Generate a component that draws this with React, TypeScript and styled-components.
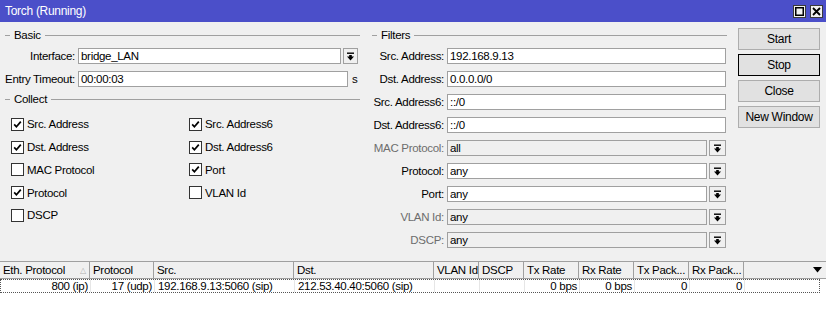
import React from "react"
import styled, { createGlobalStyle } from "styled-components"

const GlobalStyle = createGlobalStyle`
  html, body {
    margin: 0;
    padding: 0;
    background: #f0f0f0;
  }
  body {
    font-family: "Liberation Sans", Arial, sans-serif;
    font-size: 11.5px;
    letter-spacing: -0.3px;
    color: #000;
  }
  * {
    box-sizing: border-box;
  }
`

// ******************** //
// WINDOW FRAME
// ******************** //

const Window = styled.div`
  width: 826px;
  height: 321px;
  display: flex;
  flex-direction: column;
  background: #f0f0f0;
  overflow: hidden;
`

const TitleBar = styled.div`
  height: 22px;
  flex: none;
  display: flex;
  align-items: center;
  justify-content: space-between;
  padding: 0 3px 0 5px;
  background: #4b4fc9;
  color: #fff;
  font-size: 12px;
`

const TitleButtons = styled.div`
  display: flex;
  gap: 4px;
`

const TitleButton = styled.div`
  width: 13px;
  height: 13px;
  display: flex;
  align-items: center;
  justify-content: center;
  background: #f0f0f0;
  border: 1px solid #3a3a3a;
`

const Body = styled.div`
  flex: 1;
  display: flex;
  padding-top: 6px;
`

const LeftPane = styled.div`
  width: 362px;
  flex: none;
  display: flex;
  flex-direction: column;
  padding-right: 2px;
`

const FilterPane = styled.div`
  width: 361px;
  margin-left: 5px;
  flex: none;
  display: flex;
  flex-direction: column;
  padding-right: 1px;
`

const ButtonPane = styled.div`
  margin-left: 10px;
  width: 82px;
  display: flex;
  flex-direction: column;
  gap: 4px;
`

// ******************** //
// FORM PARTS
// ******************** //

const GroupHeader = styled.div<{ $top?: number }>`
  height: 14px;
  display: flex;
  align-items: center;
  margin-top: ${p => p.$top ?? 0}px;
  margin-bottom: 6px;
  padding-left: 5px;

  &::before {
    content: "";
    width: 5px;
    height: 1px;
    background: #a0a0a0;
  }

  &::after {
    content: "";
    flex: 1;
    height: 1px;
    background: #a0a0a0;
  }

  span {
    padding: 0 4px;
  }
`

const FieldRow = styled.div`
  height: 16px;
  display: flex;
  align-items: center;
  margin-bottom: 7px;
`

const FieldLabel = styled.div<{ $width: number; $disabled?: boolean }>`
  width: ${p => p.$width}px;
  flex: none;
  text-align: right;
  white-space: nowrap;
  color: ${p => (p.$disabled ? "#6d6d6d" : "#000")};
`

const TextBox = styled.div<{ $width: number; $disabled?: boolean }>`
  width: ${p => p.$width}px;
  height: 16px;
  margin-left: 3px;
  padding: 0 2px;
  line-height: 14px;
  border: 1px solid #a0a0a0;
  background: ${p => (p.$disabled ? "#f0f0f0" : "#fff")};
  white-space: nowrap;
  overflow: hidden;
`

const DropButton = styled.div<{ $width: number }>`
  width: ${p => p.$width}px;
  height: 16px;
  margin-left: 2px;
  display: flex;
  align-items: center;
  justify-content: center;
  border: 1px solid #a0a0a0;
  background: #f0f0f0;
`

const Unit = styled.span`
  margin-left: 4px;
`

const CheckGrid = styled.div`
  display: grid;
  grid-template-columns: 178px 1fr;
  grid-auto-rows: 22.75px;
  padding-left: 11px;
  margin-top: 1px;
`

const CheckItem = styled.div`
  display: flex;
  align-items: center;
  gap: 3px;
`

const Box = styled.div`
  width: 13px;
  height: 13px;
  display: flex;
  align-items: center;
  justify-content: center;
  border: 1px solid #333;
  background: #fff;
`

const ActionButton = styled.div<{ $focused?: boolean }>`
  height: 22px;
  display: flex;
  align-items: center;
  justify-content: center;
  background: #e1e1e1;
  border: 1px solid ${p => (p.$focused ? "#000" : "#adadad")};
  font-size: 12px;
`

// ******************** //
// TABLE
// ******************** //

const Table = styled.div`
  height: 60px;
  flex: none;
  background: #fff;
`

const HeaderRow = styled.div`
  height: 18px;
  display: flex;
  background: #f0f0f0;
  border-top: 1px solid #a0a0a0;
  border-bottom: 1px solid #a0a0a0;
`

const HeaderCell = styled.div<{ $width: number }>`
  width: ${p => p.$width}px;
  flex: none;
  display: flex;
  align-items: center;
  justify-content: space-between;
  padding: 0 3px;
  border-right: 1px solid #a0a0a0;
  white-space: nowrap;
  overflow: hidden;
`

const HeaderFill = styled.div`
  flex: 1;
  display: flex;
  align-items: center;
  justify-content: flex-end;
  padding-right: 4px;
`

const SortMark = styled.span`
  color: #b0b0b0;
  font-size: 8px;
`

const DataRow = styled.div`
  width: 820px;
  height: 14px;
  display: flex;
  border: 1px dotted #555;
`

const DataCell = styled.div<{ $width: number; $align?: "left" | "right" }>`
  width: ${p => p.$width}px;
  flex: none;
  padding: 0 2px 0 3px;
  line-height: 12px;
  text-align: ${p => p.$align ?? "left"};
  border-right: 1px solid #e6e6e6;
  white-space: nowrap;
  overflow: hidden;
`

// ******************** //
// ICONS
// ******************** //

const DropIcon = () => (
  <svg width="9" height="9" viewBox="0 0 9 9">
    <rect x="1" y="0.5" width="7" height="1.4" fill="#000" />
    <rect x="3.2" y="3" width="2.6" height="2" fill="#000" />
    <path d="M1 4.6 H8 L4.5 8.4 Z" fill="#000" />
  </svg>
)

const CheckIcon = () => (
  <svg width="9" height="9" viewBox="0 0 9 9">
    <path d="M1.2 4.4 L3.4 6.8 L7.8 1.6" fill="none" stroke="#000" strokeWidth="1.7" />
  </svg>
)

const MaxIcon = () => (
  <svg width="9" height="9" viewBox="0 0 9 9">
    <rect x="0.75" y="0.75" width="7.5" height="7.5" fill="none" stroke="#000" strokeWidth="1.5" />
  </svg>
)

const CloseIcon = () => (
  <svg width="9" height="9" viewBox="0 0 9 9">
    <path d="M1 1 L8 8 M8 1 L1 8" stroke="#000" strokeWidth="1.8" />
  </svg>
)

const ColumnMenuIcon = () => (
  <svg width="9" height="6" viewBox="0 0 9 6">
    <path d="M0 0 H9 L4.5 5.5 Z" fill="#000" />
  </svg>
)

// ******************** //
// DATA
// ******************** //

const checks = [
  { label: "Src. Address", on: true },
  { label: "Src. Address6", on: true },
  { label: "Dst. Address", on: true },
  { label: "Dst. Address6", on: true },
  { label: "MAC Protocol", on: false },
  { label: "Port", on: true },
  { label: "Protocol", on: true },
  { label: "VLAN Id", on: false },
  { label: "DSCP", on: false },
]

const textFilters = [
  { label: "Src. Address:", value: "192.168.9.13" },
  { label: "Dst. Address:", value: "0.0.0.0/0" },
  { label: "Src. Address6:", value: "::/0" },
  { label: "Dst. Address6:", value: "::/0" },
]

const selectFilters = [
  { label: "MAC Protocol:", value: "all", disabled: true },
  { label: "Protocol:", value: "any", disabled: false },
  { label: "Port:", value: "any", disabled: false },
  { label: "VLAN Id:", value: "any", disabled: true },
  { label: "DSCP:", value: "any", disabled: true },
]

const columns = [
  { title: "Eth. Protocol", width: 90, value: "800 (ip)", align: "right" as const, sorted: true },
  { title: "Protocol", width: 64, value: "17 (udp)", align: "right" as const },
  { title: "Src.", width: 140, value: "192.168.9.13:5060 (sip)" },
  { title: "Dst.", width: 140, value: "212.53.40.40:5060 (sip)" },
  { title: "VLAN Id", width: 45, value: "" },
  { title: "DSCP", width: 45, value: "" },
  { title: "Tx Rate", width: 55, value: "0 bps", align: "right" as const },
  { title: "Rx Rate", width: 55, value: "0 bps", align: "right" as const },
  { title: "Tx Pack...", width: 55, value: "0", align: "right" as const },
  { title: "Rx Pack...", width: 55, value: "0", align: "right" as const },
]

export default function App() {
  return (
    <>
      <GlobalStyle />
      <Window>
        <TitleBar>
          <span>Torch (Running)</span>
          <TitleButtons>
            <TitleButton><MaxIcon /></TitleButton>
            <TitleButton><CloseIcon /></TitleButton>
          </TitleButtons>
        </TitleBar>

        <Body>
          <LeftPane>
            <GroupHeader><span>Basic</span></GroupHeader>
            <FieldRow>
              <FieldLabel $width={75}>Interface:</FieldLabel>
              <TextBox $width={263}>bridge_LAN</TextBox>
              <DropButton $width={15}><DropIcon /></DropButton>
            </FieldRow>
            <FieldRow>
              <FieldLabel $width={75}>Entry Timeout:</FieldLabel>
              <TextBox $width={270}>00:00:03</TextBox>
              <Unit>s</Unit>
            </FieldRow>

            <GroupHeader $top={-2}><span>Collect</span></GroupHeader>
            <CheckGrid>
              {checks.map(c => (
                <CheckItem key={c.label}>
                  <Box>{c.on && <CheckIcon />}</Box>
                  <span>{c.label}</span>
                </CheckItem>
              ))}
            </CheckGrid>
          </LeftPane>

          <FilterPane>
            <GroupHeader><span>Filters</span></GroupHeader>
            {textFilters.map(f => (
              <FieldRow key={f.label}>
                <FieldLabel $width={77}>{f.label}</FieldLabel>
                <TextBox $width={279}>{f.value}</TextBox>
              </FieldRow>
            ))}
            {selectFilters.map(f => (
              <FieldRow key={f.label}>
                <FieldLabel $width={77} $disabled={f.disabled}>{f.label}</FieldLabel>
                <TextBox $width={260} $disabled={f.disabled}>{f.value}</TextBox>
                <DropButton $width={17}><DropIcon /></DropButton>
              </FieldRow>
            ))}
          </FilterPane>

          <ButtonPane>
            <ActionButton>Start</ActionButton>
            <ActionButton $focused>Stop</ActionButton>
            <ActionButton>Close</ActionButton>
            <ActionButton>New Window</ActionButton>
          </ButtonPane>
        </Body>

        <Table>
          <HeaderRow>
            {columns.map(col => (
              <HeaderCell key={col.title} $width={col.width}>
                <span>{col.title}</span>
                {col.sorted && <SortMark>△</SortMark>}
              </HeaderCell>
            ))}
            <HeaderFill><ColumnMenuIcon /></HeaderFill>
          </HeaderRow>
          <DataRow>
            {columns.map(col => (
              <DataCell key={col.title} $width={col.width} $align={col.align}>
                {col.value}
              </DataCell>
            ))}
          </DataRow>
        </Table>
      </Window>
    </>
  )
}
